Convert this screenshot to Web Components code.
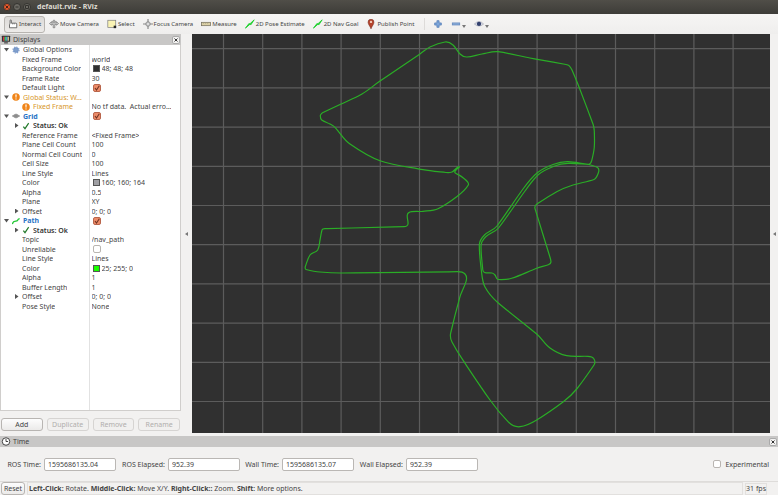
<!DOCTYPE html>
<html lang="en">
<head>
<meta charset="utf-8">
<title>default.rviz - RViz</title>
<style>
html,body{height:100%;margin:0}
body{font-family:"Noto Sans","Open Sans",sans-serif;font-size:7px;color:#444;background:#f2f1f0}
</style>
</head>
<body>
<rviz-app></rviz-app>
<script>
const ICONS = {
  interact:'<path d="M2.5 5V2.2Q2.5 1 3.3 1T4 2.2V5H9.5Q10.5 5 10.5 6V10.5H1.8V7Z" fill="#fff" stroke="#555" stroke-width="1"/><path d="M5.5 5v1.5M7.5 5v1.5" stroke="#666" stroke-width=".8"/>',
  move:'<path d="M6 1 8 3H6.8V4.5H9V3.2L11.5 5.5 9 7.5V6.5H7V10.5H5V6.5H3V7.5L.5 5.5 3 3.2V4.5H5.2V3H4Z" fill="#c9c9c9" stroke="#666" stroke-width=".7"/>',
  select:'<rect x="1" y="1.5" width="9.5" height="8.5" fill="#faf3b4" stroke="#777" stroke-width=".8"/><path d="M8 8h3v3H8z" fill="#222"/>',
  focus:'<circle cx="6" cy="6" r="2.7" fill="#ddd" stroke="#888"/><path d="M6 0v4.3M6 7.7V12M0 6h4.3M7.7 6H12" stroke="#888" stroke-width="1.4"/>',
  measure:'<rect x=".5" y="4" width="11" height="4" fill="#dbd0a6" stroke="#77715f" stroke-width=".9"/><path d="M3 4v2M5.5 4v2M8 4v2" stroke="#a09878" stroke-width=".6"/>',
  arrow:'<path d="M.5 11 5 5.2l.8.7L11 1 7 7l-1-.8Z" fill="#1ed930" stroke="#21cf30" stroke-width="1.1"/>',
  pin:'<path d="M6 11.8C5 8.5 2.5 6.5 2.5 3.8A3.5 3.5 0 0 1 9.5 3.8C9.5 6.5 7 8.5 6 11.8Z" fill="#b5432b" stroke="#782b1d" stroke-width=".7"/><circle cx="6" cy="3.5" r="1.4" fill="#f2c7b5"/>',
  plus:'<path d="M4.7 2h2.6v2.7H10v2.6H7.3V10H4.700V7.300H2V4.700h2.700Z" fill="#7da5d8" stroke="#4773b2" stroke-width=".8"/>',
  minus:'<rect x="1.500" y="4.700" width="9" height="2.500" fill="#8badd9" stroke="#5b82b9" stroke-width=".8"/>',
  eye:'<path d="M.5 6Q6 0 11.5 6 6 11 .5 6Z" fill="#d9dce5" stroke="#9a9cab" stroke-width=".7"/><circle cx="6" cy="5.8" r="2.6" fill="#34416f"/>',
  monitor:'<rect x=".5" y="1" width="11" height="8" rx=".7" fill="#333"/><path d="M2 2.3h2v5.4H2z" fill="#d34"/><path d="M4 2.3h2v5.4H4z" fill="#4b6"/><path d="M6 2.3h2v5.4H6z" fill="#49c"/><path d="M8 2.3h2v5.4H8z" fill="#cb8"/><path d="M3.5 10.5h5" stroke="#333" stroke-width="1.4"/>',
  clock:'<circle cx="6" cy="6" r="5" fill="#fff" stroke="#333" stroke-width="1.2"/><path d="M6 2.7V6h2.8" fill="none" stroke="#222" stroke-width="1.1"/>',
  gear:'<circle cx="6" cy="6" r="3.7" fill="#7f9fcc" stroke="#6287bd" stroke-width="1"/><circle cx="6" cy="6" r="4.6" fill="none" stroke="#7c9bcb" stroke-width="1.6" stroke-dasharray="2 1.6"/>',
  warn:'<circle cx="6" cy="6" r="5.7" fill="#f08418"/><path d="M5 2.4h2L6.6 7H5.4Z" fill="#fff"/><circle cx="6" cy="8.9" r=".9" fill="#fff"/>',
  grid:'<path d="M.5 6 6 3l5.500 3L6 9ZM3.200 4.500l5.500 3M8.700 4.500l-5.500 3" fill="#aaa" stroke="#777" stroke-width="1"/>',
  path:'<path d="M.5 10.500Q2 6.500 4 6.500T8 5.500Q9 3 11.500 2.500" fill="none" stroke="#22c834" stroke-width="2"/>',
  ok:'<path d="M2 6.800 4.500 10 10 1.800" fill="none" stroke="#237a2b" stroke-width="1.800"/>'
};
const icon = n => ICONS[n] ? `<svg class="icon" viewBox="0 0 12 12" aria-hidden="true">${ICONS[n]}</svg>` : '';
const RESET = '*{box-sizing:border-box}button,input{font:inherit;color:inherit;margin:0}button{padding:0}.icon{display:block;width:10px;height:10px;flex:none}';
const CHECK = 'input[type=checkbox]{appearance:none;width:8px;height:8px;border:1px solid #b9b5b1;border-radius:2px;background:#fff;display:block;flex:none}';

class Base extends HTMLElement {
  connectedCallback(){
    if(this.shadowRoot) return;
    this.attachShadow({mode:'open'}).innerHTML = `<style>${RESET}${this.css()}</style>${this.html()}`;
  }
  a(n){ return this.getAttribute(n) || ''; }
}

class RvizTitlebar extends Base {
  css(){return `:host{display:flex;align-items:center;height:14px;padding:0 3px;gap:2px;background:linear-gradient(#504e48,#3d3c38);color:#dfdbd2;font-weight:700}
    button{width:8px;height:8px;border-radius:50%;border:1px solid #34332f;background:#6b6963;display:grid;place-items:center}
    button.close{background:#e6582b}svg{width:4px;height:4px;display:block}h1{font:inherit;margin:0 0 0 4px;line-height:14px}`}
  html(){return `<button class="close" aria-label="Close"><svg viewBox="0 0 4 4"><path d="M.5.5l3 3M3.500.5l-3 3" stroke="#4b2114"/></svg></button>
    <button aria-label="Minimize"><svg viewBox="0 0 4 4"><path d="M.5 2h3" stroke="#33322e"/></svg></button>
    <button aria-label="Maximize"><svg viewBox="0 0 4 4"><path d="M.5.5h3v3h-3z" fill="none" stroke="#33322e"/></svg></button><h1><slot></slot></h1>`}
}
customElements.define('rviz-titlebar', RvizTitlebar);

class RvizTool extends Base {
  css(){return `:host{display:block;flex:none}button{display:flex;align-items:center;gap:1px;height:17px;padding:0 3px;border:1px solid transparent;border-radius:3px;background:none;font-size:6px;white-space:nowrap}
    :host([active]) button{border-color:#b7b4b0;background:linear-gradient(#dcdad8,#edebe9)}
    .drop{border:2px solid transparent;border-top:3px solid #777;border-bottom:0;margin:4px 0 0}`}
  html(){return `<button aria-label="${this.a('label')}">${icon(this.a('icon'))}<slot></slot>${this.hasAttribute('menu')?'<i class="drop"></i>':''}</button>`}
}
customElements.define('rviz-tool', RvizTool);

class RvizToolbar extends Base {
  css(){return `:host{display:flex;align-items:center;height:20px;padding-left:4px;background:linear-gradient(#f6f5f4,#efeeed)}`}
  html(){return `<slot></slot>`}
}
customElements.define('rviz-toolbar', RvizToolbar);

class RvizPanelHead extends Base {
  css(){return `:host{display:flex;align-items:center;gap:2px;height:11px;padding:0 1px;background:#c8c7c6}
    h2{font:inherit;margin:0;flex:1}.icon{width:10px;height:9px}
    button{width:8px;height:8px;border:1px solid #aaa;border-radius:2px;background:#f4f3f2;display:grid;place-items:center}button svg{width:4px;height:4px;display:block}`}
  html(){return `${icon(this.a('icon'))}<h2><slot></slot></h2><button aria-label="Close panel"><svg viewBox="0 0 4 4"><path d="M.5.5l3 3M3.500.5l-3 3" stroke="#333"/></svg></button>`}
}
customElements.define('rviz-panel-head', RvizPanelHead);

class RvizProp extends Base {
  css(){return `${CHECK}:host{display:grid;grid-template-columns:1fr 1fr;align-items:center;line-height:9px;white-space:nowrap}
    .name{display:flex;align-items:center;gap:3px;min-width:0;padding-left:21px}
    .name label,.name span,.value span{overflow:hidden;text-overflow:ellipsis}
    .name .icon{width:8px;height:8px}
    .value{display:flex;align-items:center;gap:2px;padding-left:1px;min-width:0}
    :host([level="0"]) .name{padding-left:3px}:host([level="1"]) .name{padding-left:13px}
    :host([tone=warn]) .name{color:#d79628}:host([tone=display]) .name{color:#2a74c6;font-weight:700}:host([tone=ok]) .name{font-weight:600;color:#333}
    .tri{flex:none;width:5px;height:5px;padding:0;border:0;background:#555;clip-path:polygon(20% 0,90% 50%,20% 100%)}
    .tri.open{clip-path:polygon(0 20%,100% 20%,50% 90%)}
    .tri.none{visibility:hidden}
    input[type=checkbox]{margin-left:1px}
    input:checked{background:#ec8b68;border-color:#b9654b}
    input:checked{background-image:url("data:image/svg+xml,%3Csvg xmlns='http://www.w3.org/2000/svg' viewBox='0 0 6 6'%3E%3Cpath d='M1 3l1.500 2L5.300.8' fill='none' stroke='%23703323' stroke-width='1.100'/%3E%3C/svg%3E")}
    .sw{width:7px;height:7px;border:1px solid #555;flex:none;margin-left:1px}`}
  html(){
    const n=this.a('name'), c=this.a('check'), t=this.a('tri'), s=this.a('swatch');
    const tri = t==='none' ? '<i class="tri none"></i>' : t ? `<button class="tri ${t}" aria-label="Toggle ${n}"></button>` : '';
    return `<div class="name">${tri}${icon(this.a('icon'))}${c?`<label for="c">${n}</label>`:`<span>${n}</span>`}</div>
    <div class="value">${c?`<input type="checkbox" id="c" ${c==='on'?'checked':''}>`:''}${s?`<i class="sw" style="background:${s}"></i>`:''}<span><slot></slot></span></div>`;
  }
}
customElements.define('rviz-prop', RvizProp);

class RvizTree extends Base {
  css(){return `:host{display:block;background:linear-gradient(90deg,#fff calc(50% - 1px),#e2e2e2 calc(50% - 1px),#e2e2e2 50%,#fff 50%);border:1px solid #d0cecc;border-top:0;overflow:hidden}
    ::slotted(:nth-child(odd)){height:9px}::slotted(:nth-child(even)){height:10px}`}
  html(){return `<slot></slot>`}
}
customElements.define('rviz-tree', RvizTree);

class RvizButton extends Base {
  css(){return `:host{display:block}button{width:100%;height:13px;border:1px solid #b8b5b2;border-radius:3px;background:linear-gradient(#fdfdfd,#ebeae9);line-height:9px;white-space:nowrap}
    button:disabled{color:#b0aeac;border-color:#d6d4d2;background:#f1f0ef}`}
  html(){return `<button ${this.hasAttribute('disabled')?'disabled':''}><slot></slot></button>`}
}
customElements.define('rviz-button', RvizButton);

const LOOP = [[322,113],[340,104.500],[362,94],[380,81],[420,54],[430,47],[445,42],[453,45],[460,54],[467,57],[482,54],[498,51.700],[530,58],[566,64.500],[569,65.700],[572,70],[579,87],[593,124],[594.300,131],[594.300,147],[591.700,160.700],[588.300,164.300],[568,161.600],[553,164.500],[537,173],[523,189],[497,226],[484.500,235],[479.300,245],[481.300,270],[485,287],[498,302.700],[536.700,334],[550,348],[566.700,355.700],[588,356.300],[593.700,358.500],[594,365],[576.700,389],[563,402],[536.700,420],[520,426.700],[508,421.700],[490,400],[463.300,360.700],[452,342],[450.700,333],[460,296.700],[466,281.700],[465,274],[457,271.700],[341.700,273],[320,272],[306,269.500],[305.500,266],[310,255],[317.700,250],[320,240],[322,230],[325,228.700],[404,226.700],[408,224],[407.300,215],[411.700,211.700],[423,211.300],[438,208.700],[456.700,196.700],[468.300,185],[463,177.700],[455,172.700],[456,170],[459.300,167],[456,168.500],[452,172],[446,172.500],[423,169.700],[380,160.700],[350,144],[335,127.300],[330,124],[321.700,120],[320.300,115.700],[322,113]];
const BRANCH = [[588.300,164.300],[568,163.400],[554,166.200],[538.500,174.500],[525,191],[498.500,228],[486,236.500],[481,246],[482.800,270],[485,272.700],[492,273],[495,275],[498,279.500],[511.700,278.300],[536.700,268.300],[548.300,264.700],[551,261.700],[549,254],[535,208.500],[537,204],[556.700,191.700],[573,185],[594,179.500],[598.300,173],[597.500,167.500],[588.300,164.300]];
// Cubic spline whose tangents follow the longer neighbour, so long runs stay straight.
function spline(p){
  const d=(a,b)=>Math.hypot(a[0]-b[0],a[1]-b[1])||1;
  const tan=p.map((q,i)=>{const a=p[i-1]||q,b=p[i+1]||q,u=d(a,q),v=d(q,b);
    const x=(q[0]-a[0])*u+(b[0]-q[0])*v,y=(q[1]-a[1])*u+(b[1]-q[1])*v,l=Math.hypot(x,y)||1;return [x/l,y/l];});
  let s=`M${p[0]}`;
  for(let i=1;i<p.length;i++){const h=d(p[i-1],p[i])/3,a=p[i-1],b=p[i],t=tan[i-1],w=tan[i];
    s+=`C${a[0]+t[0]*h} ${a[1]+t[1]*h} ${b[0]-w[0]*h} ${b[1]-w[1]*h} ${b[0]} ${b[1]}`;}
  return s;
}
class RvizView extends Base {
  css(){return `:host{display:block;min-width:0;min-height:0;background:#303030;overflow:hidden}svg{display:block;width:100%;height:100%}`}
  html(){
    let g='';
    for(let i=0;i<14;i++) g+=`M${(223.5+39.2*i).toFixed(1)} 34V433`;
    for(let i=0;i<10;i++) g+=`M192 ${(48.7+39.2*i).toFixed(1)}H770`;
    return `<svg viewBox="192 34 578 399" preserveAspectRatio="xMidYMid slice" role="img" aria-label="Navigation path on grid">
      <path d="${g}" stroke="#5c5c5c" stroke-width="1.200" fill="none"/>
      <path d="${spline(LOOP)}${spline(BRANCH)}" fill="none" stroke="#2aad26" stroke-width="1.200" stroke-linejoin="round"/></svg>`;
  }
}
customElements.define('rviz-view', RvizView);

class RvizHandle extends Base {
  css(){return `:host{display:grid;place-items:center}button{border:2px solid transparent;border-right:3px solid #777;border-left:0;background:none}`}
  html(){return `<button aria-label="Collapse panel"></button>`}
}
customElements.define('rviz-handle', RvizHandle);

class RvizField extends Base {
  css(){return `:host{display:flex;align-items:center;gap:3px}label{white-space:nowrap;min-width:36px;text-align:right}
    :host([wide]) label{min-width:46px}
    input{width:72px;height:13px;border:1px solid #bab7b4;border-radius:2px;background:#fff;padding:0 3px}`}
  html(){return `<label for="v">${this.a('label')}</label><input id="v" value="${this.a('value')}" readonly>`}
}
customElements.define('rviz-field', RvizField);

class RvizCheck extends Base {
  css(){return `${CHECK}:host{display:block}label{display:flex;align-items:center;gap:4px}`}
  html(){return `<label><input type="checkbox"><slot></slot></label>`}
}
customElements.define('rviz-check', RvizCheck);

class RvizStatus extends Base {
  css(){return `:host{display:flex;align-items:center;height:14px;gap:2px;padding:0 11px 0 1px;border-top:1px solid #dedcda}
    p{flex:1;margin:0;border:1px solid #e2e0de;line-height:11px;padding-left:1px}
    rviz-button{width:24px}output{border:1px solid #e2e0de;line-height:10px}`}
  html(){return `<rviz-button>Reset</rviz-button><p><slot></slot></p><output>31 fps</output>`}
}
customElements.define('rviz-status', RvizStatus);

class RvizApp extends Base {
  css(){return `:host{display:grid;grid-template-rows:auto auto minmax(0,1fr) auto auto;height:100vh}
    main{display:grid;grid-template-columns:181px 11px minmax(0,1fr) 8px;min-height:0}
    .displays{display:grid;grid-template-rows:auto minmax(0,1fr) auto;min-height:0}
    .buttons{display:grid;grid-template-columns:repeat(4,1fr);gap:4px;padding:7px 1px 2px}
    .time{margin-top:3px}.fields{display:flex;align-items:center;gap:3px;height:34px;padding:0 9px 0 5px}
    rviz-check{margin-left:auto}
    .sep{width:1px;height:12px;background:#dddbd9;margin:0 4px 0 6px}`}
  html(){return `
  <rviz-titlebar>default.rviz - RViz</rviz-titlebar>
  <rviz-toolbar>
    <rviz-tool icon="interact" label="Interact" active>Interact</rviz-tool>
    <rviz-tool icon="move" label="Move Camera">Move Camera</rviz-tool>
    <rviz-tool icon="select" label="Select">Select</rviz-tool>
    <rviz-tool icon="focus" label="Focus Camera">Focus Camera</rviz-tool>
    <rviz-tool icon="measure" label="Measure">Measure</rviz-tool>
    <rviz-tool icon="arrow" label="2D Pose Estimate">2D Pose Estimate</rviz-tool>
    <rviz-tool icon="arrow" label="2D Nav Goal">2D Nav Goal</rviz-tool>
    <rviz-tool icon="pin" label="Publish Point">Publish Point</rviz-tool>
    <i class="sep"></i>
    <rviz-tool icon="plus" label="Add tool"></rviz-tool>
    <rviz-tool icon="minus" label="Remove tool" menu></rviz-tool>
    <rviz-tool icon="eye" label="Tool visibility" menu></rviz-tool>
  </rviz-toolbar>
  <main>
    <section class="displays">
      <rviz-panel-head icon="monitor">Displays</rviz-panel-head>
      <rviz-tree>
        <rviz-prop level="0" tri="open" icon="gear" name="Global Options"></rviz-prop>
        <rviz-prop name="Fixed Frame">world</rviz-prop>
        <rviz-prop name="Background Color" swatch="#303030">48; 48; 48</rviz-prop>
        <rviz-prop name="Frame Rate">30</rviz-prop>
        <rviz-prop name="Default Light" check="on"></rviz-prop>
        <rviz-prop level="0" tri="open" icon="warn" tone="warn" name="Global Status: W…"></rviz-prop>
        <rviz-prop level="1" tri="none" icon="warn" tone="warn" name="Fixed Frame">No tf data.&nbsp; Actual erro…</rviz-prop>
        <rviz-prop level="0" tri="open" icon="grid" tone="display" name="Grid" check="on"></rviz-prop>
        <rviz-prop level="1" tri="shut" icon="ok" tone="ok" name="Status: Ok"></rviz-prop>
        <rviz-prop name="Reference Frame">&lt;Fixed Frame&gt;</rviz-prop>
        <rviz-prop name="Plane Cell Count">100</rviz-prop>
        <rviz-prop name="Normal Cell Count">0</rviz-prop>
        <rviz-prop name="Cell Size">100</rviz-prop>
        <rviz-prop name="Line Style">Lines</rviz-prop>
        <rviz-prop name="Color" swatch="#a0a0a4">160; 160; 164</rviz-prop>
        <rviz-prop name="Alpha">0.5</rviz-prop>
        <rviz-prop name="Plane">XY</rviz-prop>
        <rviz-prop level="1" tri="shut" name="Offset">0; 0; 0</rviz-prop>
        <rviz-prop level="0" tri="open" icon="path" tone="display" name="Path" check="on"></rviz-prop>
        <rviz-prop level="1" tri="shut" icon="ok" tone="ok" name="Status: Ok"></rviz-prop>
        <rviz-prop name="Topic">/nav_path</rviz-prop>
        <rviz-prop name="Unreliable" check="off"></rviz-prop>
        <rviz-prop name="Line Style">Lines</rviz-prop>
        <rviz-prop name="Color" swatch="#19ff00">25; 255; 0</rviz-prop>
        <rviz-prop name="Alpha">1</rviz-prop>
        <rviz-prop name="Buffer Length">1</rviz-prop>
        <rviz-prop level="1" tri="shut" name="Offset">0; 0; 0</rviz-prop>
        <rviz-prop name="Pose Style">None</rviz-prop>
      </rviz-tree>
      <div class="buttons"><rviz-button>Add</rviz-button><rviz-button disabled>Duplicate</rviz-button><rviz-button disabled>Remove</rviz-button><rviz-button disabled>Rename</rviz-button></div>
    </section>
    <rviz-handle></rviz-handle>
    <rviz-view></rviz-view>
    <rviz-handle></rviz-handle>
  </main>
  <section class="time">
    <rviz-panel-head icon="clock">Time</rviz-panel-head>
    <div class="fields">
      <rviz-field label="ROS Time:" value="1595686135.04"></rviz-field>
      <rviz-field wide label="ROS Elapsed:" value="952.39"></rviz-field>
      <rviz-field label="Wall Time:" value="1595686135.07"></rviz-field>
      <rviz-field wide label="Wall Elapsed:" value="952.39"></rviz-field>
      <rviz-check>Experimental</rviz-check>
    </div>
  </section>
  <rviz-status><b>Left-Click:</b> Rotate. <b>Middle-Click:</b> Move X/Y. <b>Right-Click::</b> Zoom. <b>Shift</b>: More options.</rviz-status>`}
}
customElements.define('rviz-app', RvizApp);
</script>
</body>
</html>
